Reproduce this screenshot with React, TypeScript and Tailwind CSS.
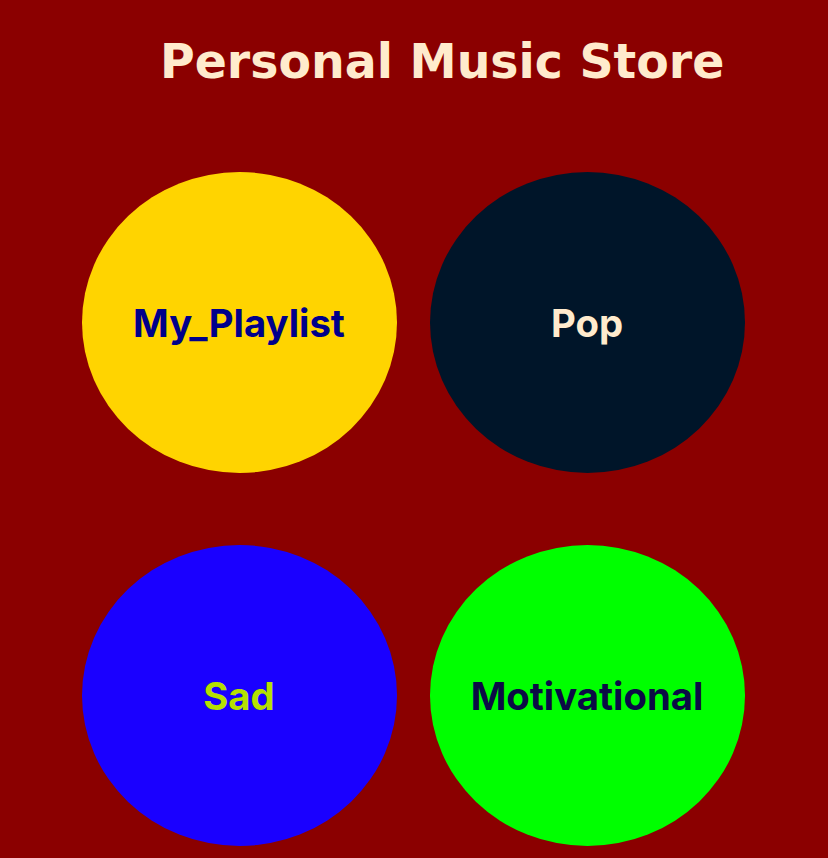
const genres = [
  { name: "My_Playlist", circle: "bg-[#ffd400]", text: "text-[#00008b]" },
  { name: "Pop", circle: "bg-[#001529]", text: "text-[#ffebcd]" },
  { name: "Sad", circle: "bg-[#1a00ff]", text: "text-[#b5e000]" },
  { name: "Motivational", circle: "bg-[#00ff00]", text: "text-[#0b0b45]" },
];

export default function App() {
  return (
    <main className="min-h-[858px] w-full bg-[#8b0000] overflow-hidden">
      <h1 className="pt-[31px] pl-[160px] text-[47.4px] leading-[62px] font-bold text-[#ffebcd] font-['DejaVu_Sans',sans-serif]">
        Personal Music Store
      </h1>
      <section className="grid grid-cols-[315px_315px] gap-x-[33px] gap-y-[72px] justify-center pr-[2px] mt-[79px]">
        {genres.map((g) => (
          <div
            key={g.name}
            className={`w-[315px] h-[301px] rounded-[50%] flex items-center justify-center ${g.circle}`}
          >
            <span
              className={`mt-[3px] text-[38.3px] font-bold font-['Inter',sans-serif] ${g.text}`}
            >
              {g.name}
            </span>
          </div>
        ))}
      </section>
    </main>
  );
}
